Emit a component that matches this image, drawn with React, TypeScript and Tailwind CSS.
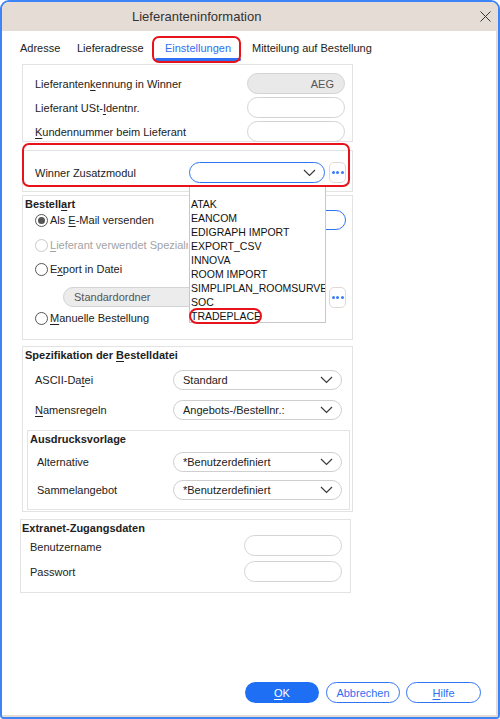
import React from 'react';

const font = "font-['Liberation_Sans',Arial,sans-serif]";

const U: React.FC<{ children: React.ReactNode }> = ({ children }) => (
  <span className="underline underline-offset-2 decoration-1">{children}</span>
);

const Chevron = () => (
  <svg width="13" height="8" viewBox="0 0 13 8" className="shrink-0">
    <polyline points="1,1 6.5,6.5 12,1" fill="none" stroke="#3a3a3a" strokeWidth="1.2" />
  </svg>
);

const Dots = () => (
  <div className="w-[17px] h-[21px] shrink-0 rounded-[5px] border border-[#e4d8d2] bg-white flex items-center justify-center gap-[1.5px]">
    <span className="w-[3px] h-[3px] rounded-full bg-[#3b7cf4]" />
    <span className="w-[3px] h-[3px] rounded-full bg-[#3b7cf4]" />
    <span className="w-[3px] h-[3px] rounded-full bg-[#3b7cf4]" />
  </div>
);

const Select: React.FC<{ value?: string; className?: string }> = ({ value, className = '' }) => (
  <div
    className={`h-[20px] rounded-full border border-[#cfcfcf] bg-white flex items-center pl-[9px] pr-[8px] text-[#222] ${className}`}
  >
    <span className="flex-1 truncate">{value}</span>
    <Chevron />
  </div>
);

const Radio: React.FC<{ checked?: boolean; disabled?: boolean }> = ({ checked, disabled }) => (
  <span
    className={`w-[13px] h-[13px] shrink-0 rounded-full border flex items-center justify-center bg-white ${
      disabled ? 'border-[#c9c9c9]' : 'border-[#555]'
    }`}
  >
    {checked && <span className="w-[7px] h-[7px] rounded-full bg-[#555]" />}
  </span>
);

const items = [
  'ATAK',
  'EANCOM',
  'EDIGRAPH IMPORT',
  'EXPORT_CSV',
  'INNOVA',
  'ROOM IMPORT',
  'SIMPLIPLAN_ROOMSURVEY',
  'SOC',
  'TRADEPLACE',
];

export default function App() {
  return (
    <div className={`relative w-[500px] h-[719px] bg-white text-[11px] leading-[14px] text-[#222] ${font}`}>
      <div className="w-full h-full border-2 border-[#3d84f7] rounded-t-[9px] rounded-b-[4px] overflow-hidden flex flex-col">
        {/* title bar */}
        <div className="h-[29px] shrink-0 bg-[#e6dcd6] flex items-center pl-[130px] pr-[7px]">
          <span className="flex-1 text-[13px] text-[#333] pt-[1px]">Lieferanteninformation</span>
          <svg width="11" height="11" viewBox="0 0 11 11">
            <line x1="0.5" y1="0.5" x2="10.5" y2="10.5" stroke="#333" strokeWidth="1" />
            <line x1="10.5" y1="0.5" x2="0.5" y2="10.5" stroke="#333" strokeWidth="1" />
          </svg>
        </div>

        <div className="flex-1 flex flex-col border-r-2 border-b-2 border-[#e6dcd6]">
          {/* tabs */}
          <div className="h-[31px] shrink-0 flex pl-[9px]">
            <div className="w-[66px] pl-[9px] flex flex-col justify-end pb-[1px]">
              <span>Adresse</span>
              <span className="mt-[3px] h-[3px]" />
            </div>
            <div className="w-[78px] flex flex-col justify-end pb-[1px]">
              <span>Lieferadresse</span>
              <span className="mt-[3px] h-[3px]" />
            </div>
            <div className="w-[86px] flex flex-col justify-end pb-[1px] text-center">
              <span className="text-[#2f6ff2]">Einstellungen</span>
              <span className="mt-[3px] h-[3px] rounded-full bg-[#2f6ff2]" />
            </div>
            <div className="pl-[11px] flex flex-col justify-end pb-[1px]">
              <span>Mitteilung auf Bestellung</span>
              <span className="mt-[3px] h-[3px]" />
            </div>
          </div>

          {/* Box 1 */}
          <div className="mt-[2px] ml-[20px] w-[331px] h-[78px] border border-[#e3e3e3] pt-[8px] flex flex-col gap-[3px]">
            <div className="flex items-center h-[21px]">
              <span className="pl-[12px]">
                Lieferanten<U>k</U>ennung in Winner
              </span>
              <div className="ml-auto mr-[7px] w-[98px] h-[21px] rounded-full border border-[#d3d3d3] bg-[#e9e9e9] flex items-center justify-end pr-[10px] text-[#555]">
                AEG
              </div>
            </div>
            <div className="flex items-center h-[21px]">
              <span className="pl-[12px]">
                Lieferant USt-<U>I</U>dentnr.
              </span>
              <div className="ml-auto mr-[7px] w-[98px] h-[21px] rounded-full border border-[#d3d3d3] bg-white" />
            </div>
            <div className="flex items-center h-[21px]">
              <span className="pl-[12px]">
                <U>K</U>undennummer beim Lieferant
              </span>
              <div className="ml-auto mr-[7px] w-[98px] h-[21px] rounded-full border border-[#d3d3d3] bg-white" />
            </div>
          </div>

          {/* Box 2 */}
          <div className="mt-[8px] ml-[20px] w-[331px] h-[42px] border border-[#e3e3e3] pt-[11px]">
            <div className="flex items-center h-[21px]">
              <span className="pl-[12px] w-[166px]">Winner Zusatzmodul</span>
              <div className="w-[136px] h-[21px] rounded-full border border-[#2f74f3] bg-white flex items-center justify-end pr-[8px]">
                <Chevron />
              </div>
              <div className="ml-[4px]">
                <Dots />
              </div>
            </div>
          </div>

          {/* Bestellart */}
          <div className="mt-[3px] ml-[20px] w-[331px] h-[145px] border border-[#e3e3e3] pt-[1px]">
            <div className="pl-[2px] h-[13px] font-bold">
              Bestell<U>a</U>rt
            </div>
            <div className="flex items-center h-[20px] pl-[12px]">
              <Radio checked />
              <span className="ml-[2px]">
                Als <U>E</U>-Mail versenden
              </span>
              <div className="ml-auto mr-[6px] w-[157px] h-[20px] rounded-full border border-[#2f74f3] bg-white" />
            </div>
            <div className="mt-[5px] flex items-center h-[20px] pl-[12px] text-[#a3a3a3]">
              <Radio disabled />
              <span className="ml-[2px] w-[138px] overflow-hidden whitespace-nowrap">
                <U>L</U>ieferant verwendet Spezialmodul
              </span>
            </div>
            <div className="mt-[4px] flex items-center h-[20px] pl-[12px]">
              <Radio />
              <span className="ml-[2px]">
                E<U>x</U>port in Datei
              </span>
            </div>
            <div className="mt-[8px] flex items-center h-[20px] pl-[40px] pr-[6px]">
              <div className="w-[262px] h-[20px] rounded-full border border-[#d3d3d3] bg-[#ececec] flex items-center pl-[10px] text-[#555]">
                Standardordner
              </div>
              <div className="ml-auto">
                <Dots />
              </div>
            </div>
            <div className="mt-[1px] flex items-center h-[20px] pl-[12px]">
              <Radio />
              <span className="ml-[2px]">
                <U>M</U>anuelle Bestellung
              </span>
            </div>
          </div>

          {/* Spezifikation */}
          <div className="mt-[6px] ml-[20px] w-[331px] h-[166px] border border-[#e3e3e3] pt-[1px]">
            <div className="pl-[2px] font-bold">
              Spezifikation der <U>B</U>estelldatei
            </div>
            <div className="mt-[8px] flex items-center pl-[12px] pr-[10px]">
              <span className="flex-1">
                ASCII-Da<U>t</U>ei
              </span>
              <Select value="Standard" className="w-[169px]" />
            </div>
            <div className="mt-[10px] flex items-center pl-[12px] pr-[10px]">
              <span className="flex-1">
                <U>N</U>amensregeln
              </span>
              <Select value="Angebots-/Bestellnr.:" className="w-[169px]" />
            </div>
            <div className="mt-[10px] ml-[4px] w-[323px] h-[80px] border border-[#e3e3e3] pt-[1px]">
              <div className="pl-[2px] font-bold">Ausdrucksvorlage</div>
              <div className="mt-[6px] flex items-center pl-[9px] pr-[7px]">
                <span className="flex-1">Alternative</span>
                <Select value="*Benutzerdefiniert" className="w-[169px]" />
              </div>
              <div className="mt-[8px] flex items-center pl-[9px] pr-[7px]">
                <span className="flex-1">Sammelangebot</span>
                <Select value="*Benutzerdefiniert" className="w-[169px]" />
              </div>
            </div>
          </div>

          {/* Extranet */}
          <div className="mt-[7px] ml-[18px] w-[331px] h-[74px] border border-[#e3e3e3] pt-[1px]">
            <div className="pl-[1px] font-bold">Extranet-Zugangsdaten</div>
            <div className="flex items-center h-[21px] pl-[9px] pr-[8px]">
              <span className="flex-1 pt-[3px]">Benutzername</span>
              <div className="w-[98px] h-[21px] rounded-full border border-[#d3d3d3] bg-white" />
            </div>
            <div className="mt-[5px] flex items-center h-[21px] pl-[9px] pr-[8px]">
              <span className="flex-1">Passwort</span>
              <div className="w-[98px] h-[21px] rounded-full border border-[#d3d3d3] bg-white" />
            </div>
          </div>

          {/* buttons */}
          <div className="mt-auto pb-[12px] pr-[15px] flex justify-end gap-[6px]">
            <button className="w-[74px] h-[21px] rounded-full bg-[#1f6ff5] text-white">
              <U>O</U>K
            </button>
            <button className="w-[74px] h-[21px] rounded-full border border-[#2f74f3] bg-white text-[#2f6ff2] ml-[1px]">
              Abbrechen
            </button>
            <button className="w-[75px] h-[21px] rounded-full border border-[#2f74f3] bg-white text-[#2f6ff2]">
              <U>H</U>ilfe
            </button>
          </div>
        </div>
      </div>

      {/* open dropdown list */}
      <div className="absolute left-[189px] top-[186px] w-[137px] h-[137px] border border-[#c8c8c8] bg-white overflow-hidden pt-[10px] text-[10.5px] text-[#111]">
        {items.map((it) => (
          <div key={it} className="pl-[1px] h-[14px] leading-[14px] whitespace-nowrap">
            {it}
          </div>
        ))}
      </div>

      {/* red highlight marks */}
      <div className="absolute left-[152px] top-[36px] w-[89px] h-[27px] rounded-[7px] border-2 border-[#e8121b] pointer-events-none" />
      <div className="absolute left-[22px] top-[143px] w-[328px] h-[44px] rounded-[7px] border-2 border-[#e8121b] pointer-events-none" />
      <div className="absolute left-[189px] top-[308px] w-[73px] h-[16px] rounded-full border-2 border-[#e8121b] pointer-events-none" />
    </div>
  );
}
